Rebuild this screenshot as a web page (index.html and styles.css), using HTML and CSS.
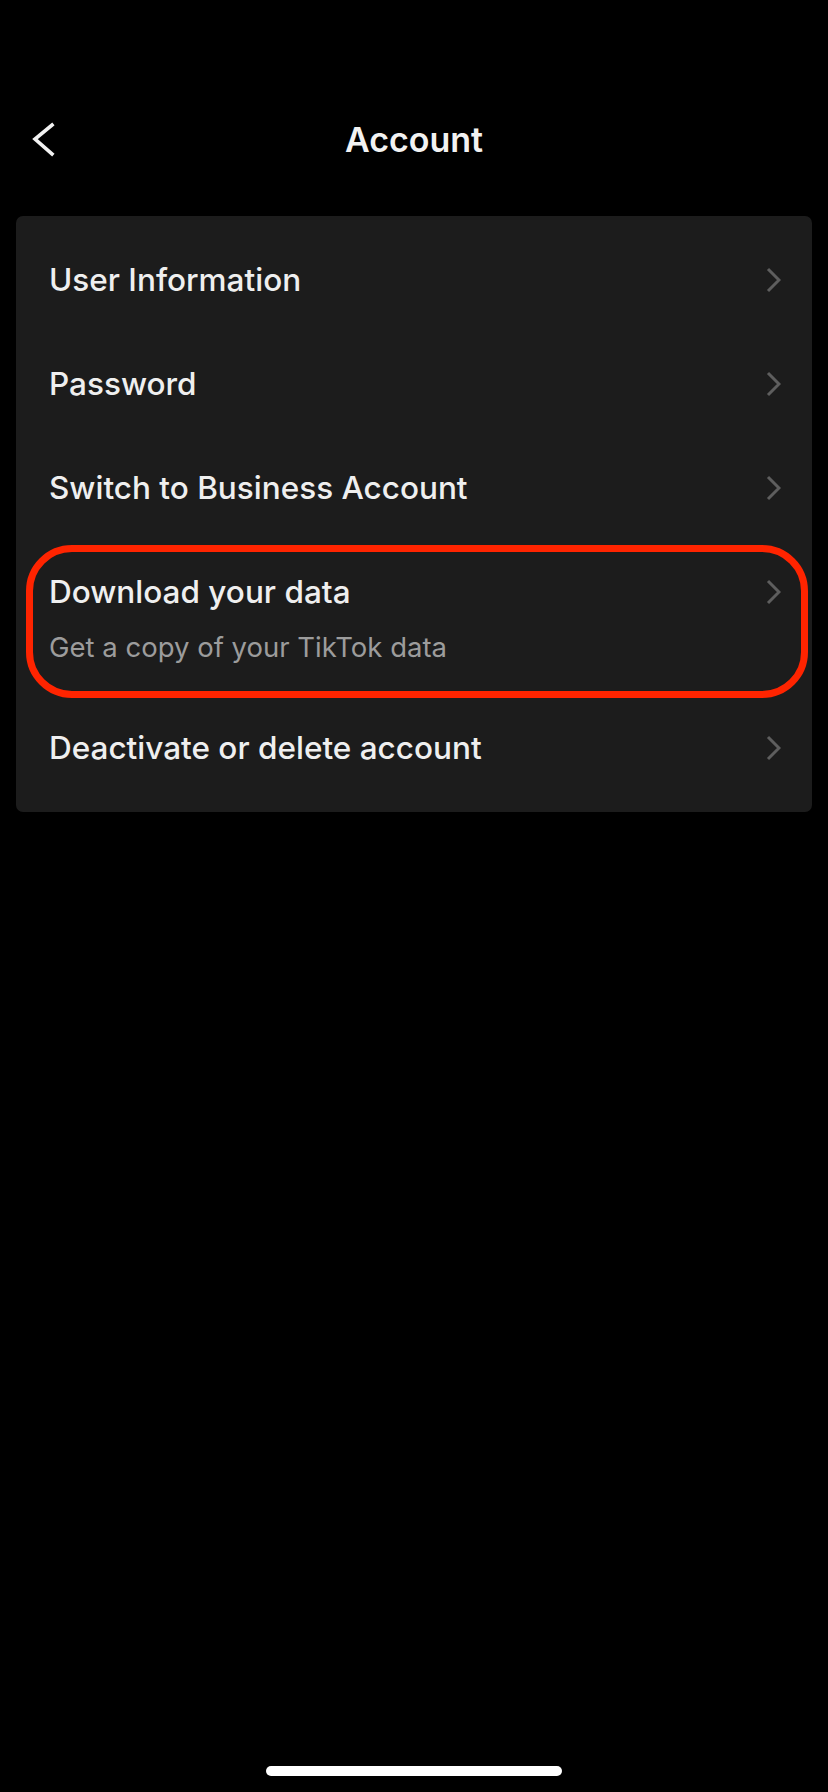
FILE: index.html
```html
<!DOCTYPE html>
<html lang="en">
<head>
<meta charset="utf-8">
<title>Account</title>
<link rel="stylesheet" href="styles.css">
</head>
<body>
<div class="screen">
  <header class="nav">
    <button class="back" aria-label="Back">
      <svg width="28" height="40" viewBox="0 0 28 40"><polyline points="20,5 3,19 20,34" fill="none" stroke="#f2f2f2" stroke-width="3.6" stroke-linecap="square" stroke-linejoin="miter"/></svg>
    </button>
    <h1 class="title">Account</h1>
    <span class="spacer"></span>
  </header>

  <section class="card">
    <div class="row">
      <div class="text"><span class="label">User Information</span></div>
      <svg class="chev" width="16" height="26" viewBox="0 0 16 26"><polyline points="3,2 14,13 3,24" fill="none" stroke="#5e5e5e" stroke-width="3"/></svg>
    </div>
    <div class="row">
      <div class="text"><span class="label">Password</span></div>
      <svg class="chev" width="16" height="26" viewBox="0 0 16 26"><polyline points="3,2 14,13 3,24" fill="none" stroke="#5e5e5e" stroke-width="3"/></svg>
    </div>
    <div class="row">
      <div class="text"><span class="label">Switch to Business Account</span></div>
      <svg class="chev" width="16" height="26" viewBox="0 0 16 26"><polyline points="3,2 14,13 3,24" fill="none" stroke="#5e5e5e" stroke-width="3"/></svg>
    </div>
    <div class="row row-sub">
      <div class="text">
        <span class="label">Download your data</span>
        <span class="sub">Get a copy of your TikTok data</span>
      </div>
      <svg class="chev" width="16" height="26" viewBox="0 0 16 26"><polyline points="3,2 14,13 3,24" fill="none" stroke="#5e5e5e" stroke-width="3"/></svg>
      <span class="annot"></span>
    </div>
    <div class="row">
      <div class="text"><span class="label">Deactivate or delete account</span></div>
      <svg class="chev" width="16" height="26" viewBox="0 0 16 26"><polyline points="3,2 14,13 3,24" fill="none" stroke="#5e5e5e" stroke-width="3"/></svg>
    </div>
  </section>

  <div class="home-indicator"></div>
</div>
</body>
</html>
```

FILE: styles.css
```css
* { box-sizing: border-box; }

html, body {
  margin: 0;
  padding: 0;
  background: #000;
}

body {
  font-family: Inter, "Liberation Sans", Arial, sans-serif;
  color: #f0f0f0;
}

.screen {
  width: 828px;
  min-height: 1792px;
  display: flex;
  flex-direction: column;
}

.nav {
  margin-top: 96px;
  height: 88px;
  display: grid;
  grid-template-columns: 1fr auto 1fr;
  align-items: center;
  padding: 0 32px;
}

.back {
  justify-self: start;
  background: none;
  border: 0;
  padding: 0;
  margin: 0;
  display: flex;
  align-items: center;
  cursor: pointer;
}

.title {
  margin: 0;
  font-size: 34px;
  font-weight: 600;
  color: #f2f2f2;
  line-height: 40px;
  letter-spacing: 0;
}

.card {
  margin: 32px 16px 0;
  background: #1c1c1c;
  border-radius: 7px;
  padding: 12px 0;
  display: flex;
  flex-direction: column;
}

.row {
  position: relative;
  display: flex;
  align-items: flex-start;
  justify-content: space-between;
  padding: 32px 31px 32px 33px;
}

.text {
  display: flex;
  flex-direction: column;
}

.label {
  font-size: 31.5px;
  font-weight: 500;
  line-height: 40px;
  color: #efefef;
}

.sub {
  margin-top: 15px;
  font-size: 27.5px;
  font-weight: 400;
  line-height: 40px;
  color: #9c9c9c;
}

.row-sub {
  padding-bottom: 29px;
}

.chev {
  margin-top: 7px;
  flex: none;
}

.annot {
  position: absolute;
  left: 10px;
  right: 4px;
  top: 5px;
  bottom: -2px;
  border: 7px solid #ff2400;
  border-radius: 46px;
  pointer-events: none;
}

.home-indicator {
  margin: auto auto 16px;
  width: 296px;
  height: 10px;
  border-radius: 5px;
  background: #fff;
}
```
